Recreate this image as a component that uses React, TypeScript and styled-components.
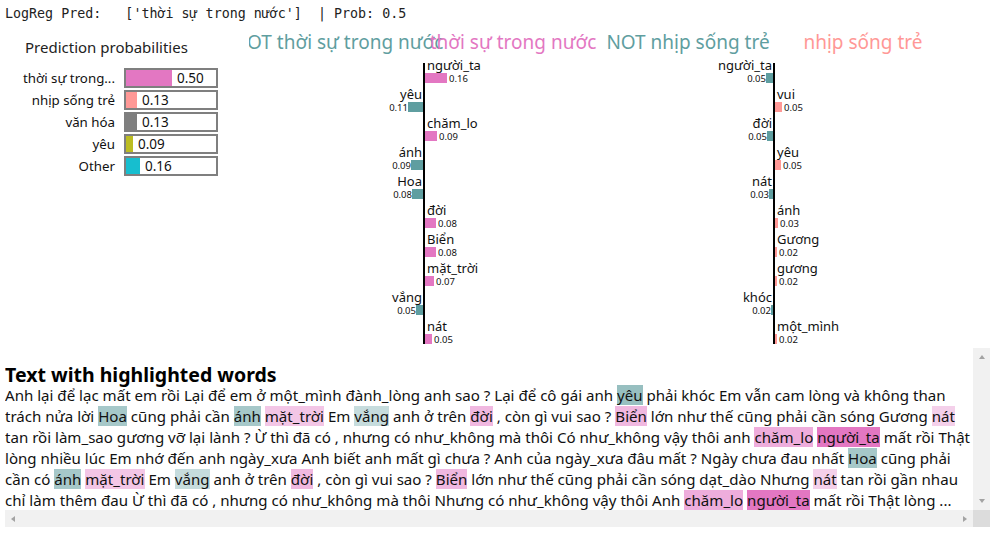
import React from 'react'
import styled, { createGlobalStyle } from 'styled-components'

const UI_FONT = `"Noto Sans", "Open Sans", sans-serif`

const PINK = '#e377c2'
const TEAL = '#5f9ea0'
const SALMON = '#ff9896'

type Prob = { label: string; value: string; width: number; color: string }
type Feature = { word: string; value: string; width: number; side: 'left' | 'right' }
type ChartProps = {
    notTitle: string
    title: string
    titleColor: string
    barColor: string
    features: Feature[]
}
type Piece = string | { text: string; bg: string }

const probs: Prob[] = [
    { label: 'thời sự trong...', value: '0.50', width: 46, color: PINK },
    { label: 'nhịp sống trẻ', value: '0.13', width: 11, color: SALMON },
    { label: 'văn hóa', value: '0.13', width: 11, color: '#7f7f7f' },
    { label: 'yêu', value: '0.09', width: 7, color: '#bcbd22' },
    { label: 'Other', value: '0.16', width: 14, color: '#17becf' },
]

const firstFeatures: Feature[] = [
    { word: 'người_ta', value: '0.16', width: 22, side: 'right' },
    { word: 'yêu', value: '0.11', width: 15, side: 'left' },
    { word: 'chăm_lo', value: '0.09', width: 12, side: 'right' },
    { word: 'ánh', value: '0.09', width: 12, side: 'left' },
    { word: 'Hoa', value: '0.08', width: 11, side: 'left' },
    { word: 'đời', value: '0.08', width: 11, side: 'right' },
    { word: 'Biển', value: '0.08', width: 11, side: 'right' },
    { word: 'mặt_trời', value: '0.07', width: 9, side: 'right' },
    { word: 'vắng', value: '0.05', width: 7, side: 'left' },
    { word: 'nát', value: '0.05', width: 7, side: 'right' },
]

const secondFeatures: Feature[] = [
    { word: 'người_ta', value: '0.05', width: 7, side: 'left' },
    { word: 'vui', value: '0.05', width: 7, side: 'right' },
    { word: 'đời', value: '0.05', width: 6, side: 'left' },
    { word: 'yêu', value: '0.05', width: 6, side: 'right' },
    { word: 'nát', value: '0.03', width: 4, side: 'left' },
    { word: 'ánh', value: '0.03', width: 3, side: 'right' },
    { word: 'Gương', value: '0.02', width: 2, side: 'right' },
    { word: 'gương', value: '0.02', width: 2, side: 'right' },
    { word: 'khóc', value: '0.02', width: 2, side: 'left' },
    { word: 'một_mình', value: '0.02', width: 2, side: 'right' },
]

const TEAL_DARK = '#97bfc0'
const TEAL_MID = '#a6c8c9'
const TEAL_LIGHT = '#c6dcdd'
const PINK_STRONG = '#e377c2'
const PINK_MID = '#eeaddc'
const PINK_SOFT = '#f0b8e0'
const PINK_LIGHT = '#f3c6e6'
const PINK_PALE = '#f4d0ea'

const passage: Piece[] = [
    'Anh lại để lạc mất em rồi Lại để em ở một_mình đành_lòng anh sao ? Lại để cô gái anh ',
    { text: 'yêu', bg: TEAL_DARK },
    ' phải khóc Em vẫn cam lòng và không than trách nửa lời ',
    { text: 'Hoa', bg: TEAL_MID },
    ' cũng phải cần ',
    { text: 'ánh', bg: TEAL_MID },
    ' ',
    { text: 'mặt_trời', bg: PINK_LIGHT },
    ' Em ',
    { text: 'vắng', bg: TEAL_LIGHT },
    ' anh ở trên ',
    { text: 'đời', bg: PINK_SOFT },
    ' , còn gì vui sao ? ',
    { text: 'Biển', bg: PINK_SOFT },
    ' lớn như thế cũng phải cần sóng Gương ',
    { text: 'nát', bg: PINK_PALE },
    ' tan rồi làm_sao gương vỡ lại lành ? Ừ thì đã có , nhưng có như_không mà thôi Có như_không vậy thôi anh ',
    { text: 'chăm_lo', bg: PINK_MID },
    ' ',
    { text: 'người_ta', bg: PINK_STRONG },
    ' mất rồi Thật lòng nhiều lúc Em nhớ đến anh ngày_xưa Anh biết anh mất gì chưa ? Anh của ngày_xưa đâu mất ? Ngày chưa đau nhất ',
    { text: 'Hoa', bg: TEAL_MID },
    ' cũng phải cần có ',
    { text: 'ánh', bg: TEAL_MID },
    ' ',
    { text: 'mặt_trời', bg: PINK_LIGHT },
    ' Em ',
    { text: 'vắng', bg: TEAL_LIGHT },
    ' anh ở trên ',
    { text: 'đời', bg: PINK_SOFT },
    ' , còn gì vui sao ? ',
    { text: 'Biển', bg: PINK_SOFT },
    ' lớn như thế cũng phải cần sóng dạt_dào Nhưng ',
    { text: 'nát', bg: PINK_PALE },
    ' tan rồi gần nhau chỉ làm thêm đau Ừ thì đã có , nhưng có như_không mà thôi Nhưng có như_không vậy thôi Anh ',
    { text: 'chăm_lo', bg: PINK_MID },
    ' ',
    { text: 'người_ta', bg: PINK_STRONG },
    ' mất rồi Thật lòng ...',
]

const GlobalStyle = createGlobalStyle`
    html, body {
        margin: 0;
        padding: 0;
        background: white;
        overflow: hidden;
    }
`

const Page = styled.div`
    width: 994px;
    height: 534px;
    display: flex;
    flex-direction: column;
    font-family: ${UI_FONT};
    color: black;
`

const PredLine = styled.pre`
    margin: 0;
    padding: 5px 0 0 5px;
    height: 17px;
    line-height: 17px;
    font-family: "DejaVu Sans Mono", monospace;
    font-size: 13.33px;
    color: #222;
`

const ChartRow = styled.div`
    display: flex;
    height: 326px;
`

const ProbPanel = styled.div`
    width: 249px;
    flex: none;
    padding-top: 15px;
    box-sizing: border-box;
`

const ProbTitle = styled.div`
    padding-left: 25px;
    font-size: 15px;
    line-height: 20px;
    color: #222;
    margin-bottom: 11px;
`

const ProbList = styled.div`
    display: flex;
    flex-direction: column;
    gap: 2px;
`

const ProbRow = styled.div`
    display: flex;
    align-items: center;
    height: 20px;
`

const ProbLabel = styled.div`
    width: 115px;
    text-align: right;
    font-size: 13.3px;
    white-space: nowrap;
    color: #111;
`

const ProbTrack = styled.div`
    margin-left: 9px;
    width: 94px;
    height: 20px;
    box-sizing: border-box;
    border: 2px solid #7f7f7f;
    display: flex;
    align-items: center;
`

const ProbFill = styled.div<{ $color: string }>`
    height: 16px;
    background: ${p => p.$color};
    flex: none;
`

const ProbValue = styled.span`
    margin-left: 5px;
    font-size: 13.5px;
    color: #111;
`

const ExplainChart = styled.svg`
    flex: none;
    display: block;
    overflow: hidden;
    font-family: ${UI_FONT};
`

const ChartTitle = styled.text`
    font-size: 19px;
`

const WordLabel = styled.text`
    font-size: 13px;
    fill: #111;
`

const ValueLabel = styled.text`
    font-size: 9.5px;
    fill: #111;
`

const ScrollFrame = styled.div`
    margin: 0 4px 0 5px;
    height: 179px;
    display: grid;
    grid-template-columns: 1fr 17px;
    grid-template-rows: 1fr 17px;
`

const TextPane = styled.div`
    overflow: hidden;
    padding-top: 16px;
`

const Heading = styled.h3`
    margin: 0;
    font-size: 19.5px;
    line-height: 21px;
    font-weight: 700;
    font-family: ${UI_FONT};
`

const Passage = styled.div`
    font-size: 15.08px;
    line-height: 21px;
    color: #111;
`

const Mark = styled.span<{ $bg: string }>`
    background: ${p => p.$bg};
`

const VBar = styled.div`
    background: #f1f1f1;
    display: flex;
    flex-direction: column;
    justify-content: space-between;
    align-items: center;
    padding: 7px 0;
    box-sizing: border-box;
`

const HBar = styled.div`
    background: #f1f1f1;
    display: flex;
    justify-content: space-between;
    align-items: center;
    padding: 0 6px;
`

const Corner = styled.div`
    background: #dcdcdc;
`

const Arrow = styled.span<{ $dir: 'up' | 'down' | 'left' | 'right' }>`
    width: 0;
    height: 0;
    border-style: solid;
    border-color: transparent;
    border-width: 3.5px;
    ${p => p.$dir === 'up' && 'border-top-width: 0; border-bottom-width: 4px; border-bottom-color: #a3a3a3;'}
    ${p => p.$dir === 'down' && 'border-bottom-width: 0; border-top-width: 4px; border-top-color: #a3a3a3;'}
    ${p => p.$dir === 'left' && 'border-left-width: 0; border-right-width: 4px; border-right-color: #a3a3a3;'}
    ${p => p.$dir === 'right' && 'border-right-width: 0; border-left-width: 4px; border-left-color: #a3a3a3;'}
`

const AXIS_X = 175
const ROW_H = 29

const Explanation = ({ notTitle, title, titleColor, barColor, features }: ChartProps) => {
    return (
        <ExplainChart width={350} height={326}>
            <ChartTitle x={89} y={27} textAnchor="middle" fill={TEAL}>{notTitle}</ChartTitle>
            <ChartTitle x={264} y={27} textAnchor="middle" fill={titleColor}>{title}</ChartTitle>
            <rect x={AXIS_X - 1} y={41} width={2} height={281} fill="black" />
            {features.map((f, i) => {
                const top = 48 + i * ROW_H
                const isRight = f.side === 'right'
                return (
                    <g key={f.word + i}>
                        <WordLabel x={isRight ? AXIS_X + 3 : AXIS_X - 2} y={top} textAnchor={isRight ? 'start' : 'end'}>{f.word}</WordLabel>
                        <rect
                            x={isRight ? AXIS_X + 1 : AXIS_X - 1 - f.width}
                            y={top + 3}
                            width={f.width}
                            height={10}
                            fill={isRight ? barColor : TEAL}
                        />
                        <ValueLabel
                            x={isRight ? AXIS_X + f.width + 3 : AXIS_X - f.width - 1}
                            y={top + 12}
                            textAnchor={isRight ? 'start' : 'end'}
                        >
                            {f.value}
                        </ValueLabel>
                    </g>
                )
            })}
        </ExplainChart>
    )
}

const App = () => {
    return (
        <Page>
            <GlobalStyle />
            <PredLine>{"LogReg Pred:   ['thời sự trong nước']  | Prob: 0.5"}</PredLine>
            <ChartRow>
                <ProbPanel>
                    <ProbTitle>Prediction probabilities</ProbTitle>
                    <ProbList>
                        {probs.map(p => (
                            <ProbRow key={p.label}>
                                <ProbLabel>{p.label}</ProbLabel>
                                <ProbTrack>
                                    <ProbFill $color={p.color} style={{ width: p.width }} />
                                    <ProbValue>{p.value}</ProbValue>
                                </ProbTrack>
                            </ProbRow>
                        ))}
                    </ProbList>
                </ProbPanel>
                <Explanation
                    notTitle="NOT thời sự trong nước"
                    title="thời sự trong nước"
                    titleColor={PINK}
                    barColor={PINK}
                    features={firstFeatures}
                />
                <Explanation
                    notTitle="NOT nhịp sống trẻ"
                    title="nhịp sống trẻ"
                    titleColor={SALMON}
                    barColor={SALMON}
                    features={secondFeatures}
                />
            </ChartRow>
            <ScrollFrame>
                <TextPane>
                    <Heading>Text with highlighted words</Heading>
                    <Passage>
                        {passage.map((piece, i) =>
                            typeof piece === 'string'
                                ? <React.Fragment key={i}>{piece}</React.Fragment>
                                : <Mark key={i} $bg={piece.bg}>{piece.text}</Mark>
                        )}
                    </Passage>
                </TextPane>
                <VBar>
                    <Arrow $dir="up" />
                    <Arrow $dir="down" />
                </VBar>
                <HBar>
                    <Arrow $dir="left" />
                    <Arrow $dir="right" />
                </HBar>
                <Corner />
            </ScrollFrame>
        </Page>
    )
}

export default App
